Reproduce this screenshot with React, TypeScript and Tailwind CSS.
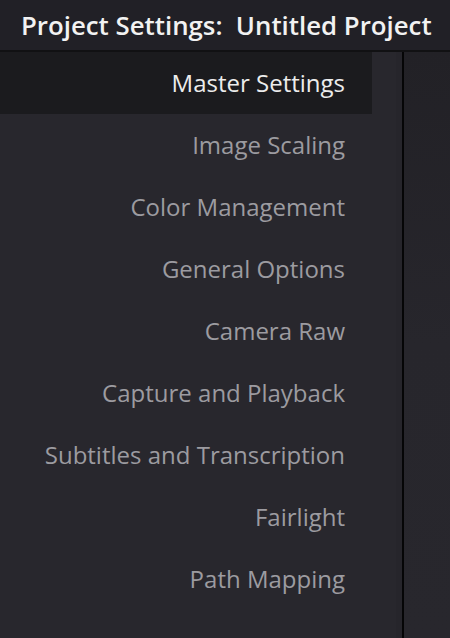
import React from "react";

const items = [
  "Master Settings",
  "Image Scaling",
  "Color Management",
  "General Options",
  "Camera Raw",
  "Capture and Playback",
  "Subtitles and Transcription",
  "Fairlight",
  "Path Mapping",
];

export default function App() {
  return (
    <div
      className="w-[450px] h-[638px] flex flex-col overflow-hidden bg-[#28272d]"
      style={{ fontFamily: '"Open Sans", "Noto Sans", sans-serif' }}
    >
      <div className="h-[50px] shrink-0 bg-[#212026] flex items-center pl-[21px] text-[25.8px] font-semibold text-[#f2f2f2] whitespace-pre">
        {"Project Settings:  Untitled Project"}
      </div>
      <div className="h-[2px] shrink-0 bg-[#111113]" />
      <div className="flex flex-1 min-h-0">
        <div className="w-[396px] shrink-0 flex bg-[#28272d]">
          <div className="w-[372px] flex flex-col">
            {items.map((it, i) => (
              <div
                key={it}
                className={
                  i === 0
                    ? "h-[62px] flex items-center justify-end pr-[27px] text-[24px] bg-[#1b1b1e] text-[#ececec]"
                    : "h-[62px] flex items-center justify-end pr-[27px] text-[24px] text-[#9c9ba0]"
                }
              >
                {it}
              </div>
            ))}
          </div>
        </div>
        <div className="w-[6px] shrink-0 bg-[#26252b]" />
        <div className="w-[2px] shrink-0 bg-[#050506]" />
        <div className="flex-1 bg-gradient-to-b from-[#222126] to-[#28272d] via-[#27262c]" />
      </div>
    </div>
  );
}
